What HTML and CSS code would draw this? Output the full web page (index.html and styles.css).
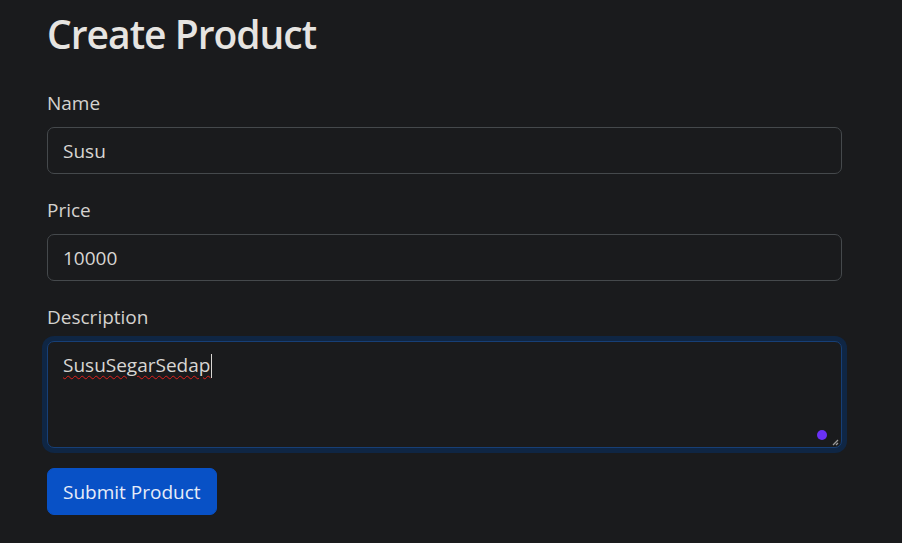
FILE: index.html
```html
<!DOCTYPE html>
<html lang="en">
<head>
<meta charset="utf-8">
<title>Create Product</title>
<link rel="stylesheet" href="styles.css">
</head>
<body>
<main class="page">
  <h1 class="title">Create Product</h1>
  <form class="form">
    <div class="field">
      <label class="label" for="name">Name</label>
      <input class="control" id="name" type="text" value="Susu">
    </div>
    <div class="field">
      <label class="label" for="price">Price</label>
      <input class="control" id="price" type="text" value="10000">
    </div>
    <div class="field">
      <label class="label">Description</label>
      <div class="control area">
        <span class="misspelled">SusuSegarSedap</span><span class="caret"></span>
        <span class="ext-dot"></span>
        <svg class="grip" width="8" height="8" viewBox="0 0 8 8"><path d="M7 2 L2 7 M7 5 L5 7" stroke="#9a9a9a" stroke-width="1.3" fill="none"/></svg>
      </div>
    </div>
    <button class="btn" type="button">Submit Product</button>
  </form>
</main>
</body>
</html>
```
FILE: styles.css
```css
html, body {
  margin: 0;
  background: #1a1b1d;
}
body {
  font-family: "Open Sans", "Noto Sans", sans-serif;
  color: #e2e0dd;
  font-size: 19px;
  line-height: 30px;
}
.page {
  width: 795px;
  padding: 10px 0 0 47px;
}
.title {
  margin: 0 0 30px;
  font-size: 39px;
  font-weight: 600;
  line-height: 47px;
  letter-spacing: -1px;
  color: #e6e4e1;
}
.field {
  margin-bottom: 20px;
}
.label {
  display: block;
  margin-bottom: 9px;
  padding-top: 1px;
  color: #d4d2cf;
}
.control {
  display: block;
  box-sizing: border-box;
  width: 100%;
  height: 47px;
  padding: 7.5px 15px;
  font: inherit;
  color: #d8d6d3;
  background: #1a1b1d;
  border: 1.25px solid #45494c;
  border-radius: 7px;
  outline: none;
}
.area {
  position: relative;
  height: 107px;
  padding-top: 8px;
  border-color: #173f76;
  box-shadow: 0 0 0 5px #0f2644;
}
.misspelled {
  text-decoration: underline wavy #e0201c;
  text-decoration-thickness: 1px;
  text-underline-offset: 3px;
}
.caret {
  display: inline-block;
  width: 1px;
  height: 24px;
  margin-left: 1px;
  vertical-align: -6px;
  background: #d8d6d3;
}
.ext-dot {
  position: absolute;
  right: 14px;
  bottom: 7px;
  width: 10px;
  height: 10px;
  border-radius: 50%;
  background: #6a31f6;
}
.grip {
  position: absolute;
  right: 2px;
  bottom: 1px;
}
.btn {
  display: block;
  height: 47px;
  padding: 7.5px 15px;
  font: inherit;
  color: #e6ecf8;
  background: #0851c6;
  border: 1.25px solid #0851c6;
  border-radius: 7px;
}
```
